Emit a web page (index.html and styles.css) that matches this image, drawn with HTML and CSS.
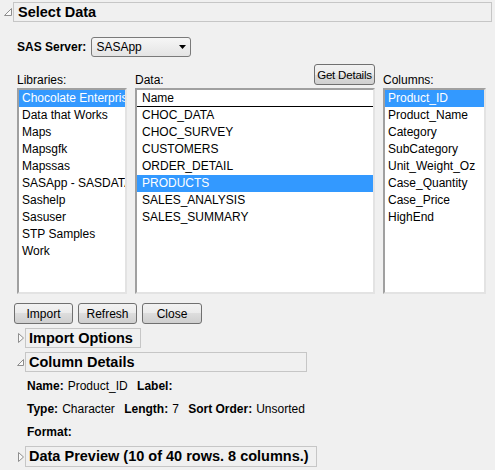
FILE: index.html
```html
<!DOCTYPE html>
<html lang="en">
<head>
    <meta charset="UTF-8">
    <title>Select Data</title>
    <link rel="stylesheet" href="styles.css">
</head>
<body>
    <div class="outline top-outline">
        <svg class="tri" width="10" height="10" viewBox="0 0 10 10"><polygon points="8.5,1.5 8.5,8.5 1.5,8.5" fill="#fafafa" stroke="#8e8e8e" stroke-width="1"/></svg>
        <div class="title-box main-title">Select Data</div>
    </div>

    <div class="content">
        <div class="server-row">
            <span class="bold">SAS Server:</span>
            <div class="select">
                <span>SASApp</span>
                <svg width="7" height="4" viewBox="0 0 7 4"><polygon points="0,0 7,0 3.5,4" fill="#000"/></svg>
            </div>
        </div>

        <div class="lists">
            <div class="label-cell">Libraries:</div>
            <div class="label-cell data-label">
                <span>Data:</span>
                <button class="btn details-btn">Get Details</button>
            </div>
            <div class="label-cell">Columns:</div>

            <div class="list">
                <div class="row selected">Chocolate Enterprises</div>
                <div class="row">Data that Works</div>
                <div class="row">Maps</div>
                <div class="row">Mapsgfk</div>
                <div class="row">Mapssas</div>
                <div class="row">SASApp - SASDATA</div>
                <div class="row">Sashelp</div>
                <div class="row">Sasuser</div>
                <div class="row">STP Samples</div>
                <div class="row">Work</div>
            </div>
            <div class="list data-list">
                <div class="row col-head">Name</div>
                <div class="row">CHOC_DATA</div>
                <div class="row">CHOC_SURVEY</div>
                <div class="row">CUSTOMERS</div>
                <div class="row">ORDER_DETAIL</div>
                <div class="row selected">PRODUCTS</div>
                <div class="row">SALES_ANALYSIS</div>
                <div class="row">SALES_SUMMARY</div>
            </div>
            <div class="list">
                <div class="row selected">Product_ID</div>
                <div class="row">Product_Name</div>
                <div class="row">Category</div>
                <div class="row">SubCategory</div>
                <div class="row">Unit_Weight_Oz</div>
                <div class="row">Case_Quantity</div>
                <div class="row">Case_Price</div>
                <div class="row">HighEnd</div>
            </div>
        </div>
    </div>

    <div class="buttons">
        <button class="btn">Import</button>
        <button class="btn">Refresh</button>
        <button class="btn">Close</button>
    </div>

    <div class="outline sub-outline first-sub">
        <svg class="tri" width="8" height="12" viewBox="0 0 8 12"><polygon points="1.5,1.5 6.5,6 1.5,10.5" fill="#fafafa" stroke="#8e8e8e" stroke-width="1"/></svg>
        <div class="title-box">Import Options</div>
    </div>

    <div class="outline sub-outline">
        <svg class="tri" width="8" height="12" viewBox="0 0 8 12"><polygon points="6.5,3.5 6.5,9.5 0.5,9.5" fill="#fafafa" stroke="#8e8e8e" stroke-width="1"/></svg>
        <div class="title-box wide-box">Column Details</div>
    </div>

    <div class="details">
        <div class="detail-row">
            <span class="bold">Name:</span><span class="val">Product_ID</span>
            <span class="bold">Label:</span>
        </div>
        <div class="detail-row">
            <span class="bold">Type:</span><span class="val">Character</span>
            <span class="bold">Length:</span><span class="val">7</span>
            <span class="bold">Sort Order:</span><span class="val">Unsorted</span>
        </div>
        <div class="detail-row">
            <span class="bold">Format:</span>
        </div>
    </div>

    <div class="outline sub-outline preview-outline">
        <svg class="tri" width="8" height="12" viewBox="0 0 8 12"><polygon points="1.5,1.5 6.5,6 1.5,10.5" fill="#fafafa" stroke="#8e8e8e" stroke-width="1"/></svg>
        <div class="title-box">Data Preview (10 of 40 rows. 8 columns.)</div>
    </div>
</body>
</html>
```

FILE: styles.css
```css
body {
    margin: 0;
    padding: 0;
    width: 495px;
    height: 470px;
    overflow: hidden;
    background-color: #f0f0f0;
    font-family: "Liberation Sans", Arial, sans-serif;
    font-size: 12px;
    color: #000;
}
.bold {
    font-weight: bold;
}
.outline {
    display: flex;
    align-items: center;
}
.top-outline {
    padding: 2px 3px 0 3px;
}
.title-box {
    box-sizing: border-box;
    height: 20px;
    line-height: 18px;
    border: 1px solid #c6c6c6;
    font-size: 14.5px;
    font-weight: bold;
    padding: 0 7px 0 3px;
    white-space: nowrap;
}
.main-title {
    flex: 1;
    padding-left: 4px;
}
.content {
    padding-left: 17px;
}
.server-row {
    display: flex;
    align-items: center;
    margin-top: 15px;
    height: 20px;
}
.select {
    box-sizing: border-box;
    margin-left: 5px;
    width: 100px;
    height: 20px;
    border: 1px solid #7a7a7a;
    border-radius: 3px;
    background: linear-gradient(#f6f6f6, #e4e4e4);
    display: flex;
    align-items: center;
    justify-content: space-between;
    padding: 0 4px 0 4px;
}
.lists {
    display: grid;
    grid-template-columns: 110px 240px 103px;
    grid-template-rows: 24px 206px;
    column-gap: 8px;
    margin-top: 7px;
}
.label-cell {
    display: flex;
    align-items: flex-end;
    line-height: 14px;
    padding-bottom: 1px;
}
.data-label {
    justify-content: space-between;
}
.data-label .details-btn {
    align-self: flex-start;
    width: 61px;
    font-size: 11.5px;
    letter-spacing: -0.2px;
}
.list {
    box-sizing: border-box;
    background-color: #fff;
    border: 2px solid;
    border-color: #a0a0a0 #e3e3e3 #e3e3e3 #a0a0a0;
    overflow: hidden;
}
.row {
    height: 17px;
    line-height: 17px;
    padding-left: 3px;
    white-space: nowrap;
    overflow: hidden;
}
.data-list .row {
    padding-left: 5px;
}
.data-list .col-head {
    box-sizing: border-box;
    border-bottom: 1px solid #000;
}
.selected {
    background-color: #3399ff;
    color: #fff;
}
.buttons {
    display: flex;
    gap: 5px;
    padding-left: 14px;
    margin-top: 9px;
}
.btn {
    box-sizing: border-box;
    width: 59px;
    height: 21px;
    padding: 0;
    border: 1px solid #707070;
    border-radius: 3px;
    background: linear-gradient(#f2f2f2 0%, #ebebeb 50%, #dddddd 50%, #cfcfcf 100%);
    font-family: "Liberation Sans", Arial, sans-serif;
    font-size: 12px;
    color: #000;
    white-space: nowrap;
}
.buttons .btn:last-child {
    width: 60px;
}
.sub-outline {
    padding-left: 17px;
    margin-top: 4px;
}
.wide-box {
    width: 282px;
}
.details {
    padding-left: 27px;
    margin-top: 3px;
}
.detail-row {
    height: 23px;
    line-height: 23px;
    white-space: nowrap;
}
.val {
    margin-left: 4px;
    margin-right: 6px;
}
.preview-outline {
    margin-top: 2px;
}
.preview-outline .title-box {
    height: 21px;
    line-height: 19px;
}
```
